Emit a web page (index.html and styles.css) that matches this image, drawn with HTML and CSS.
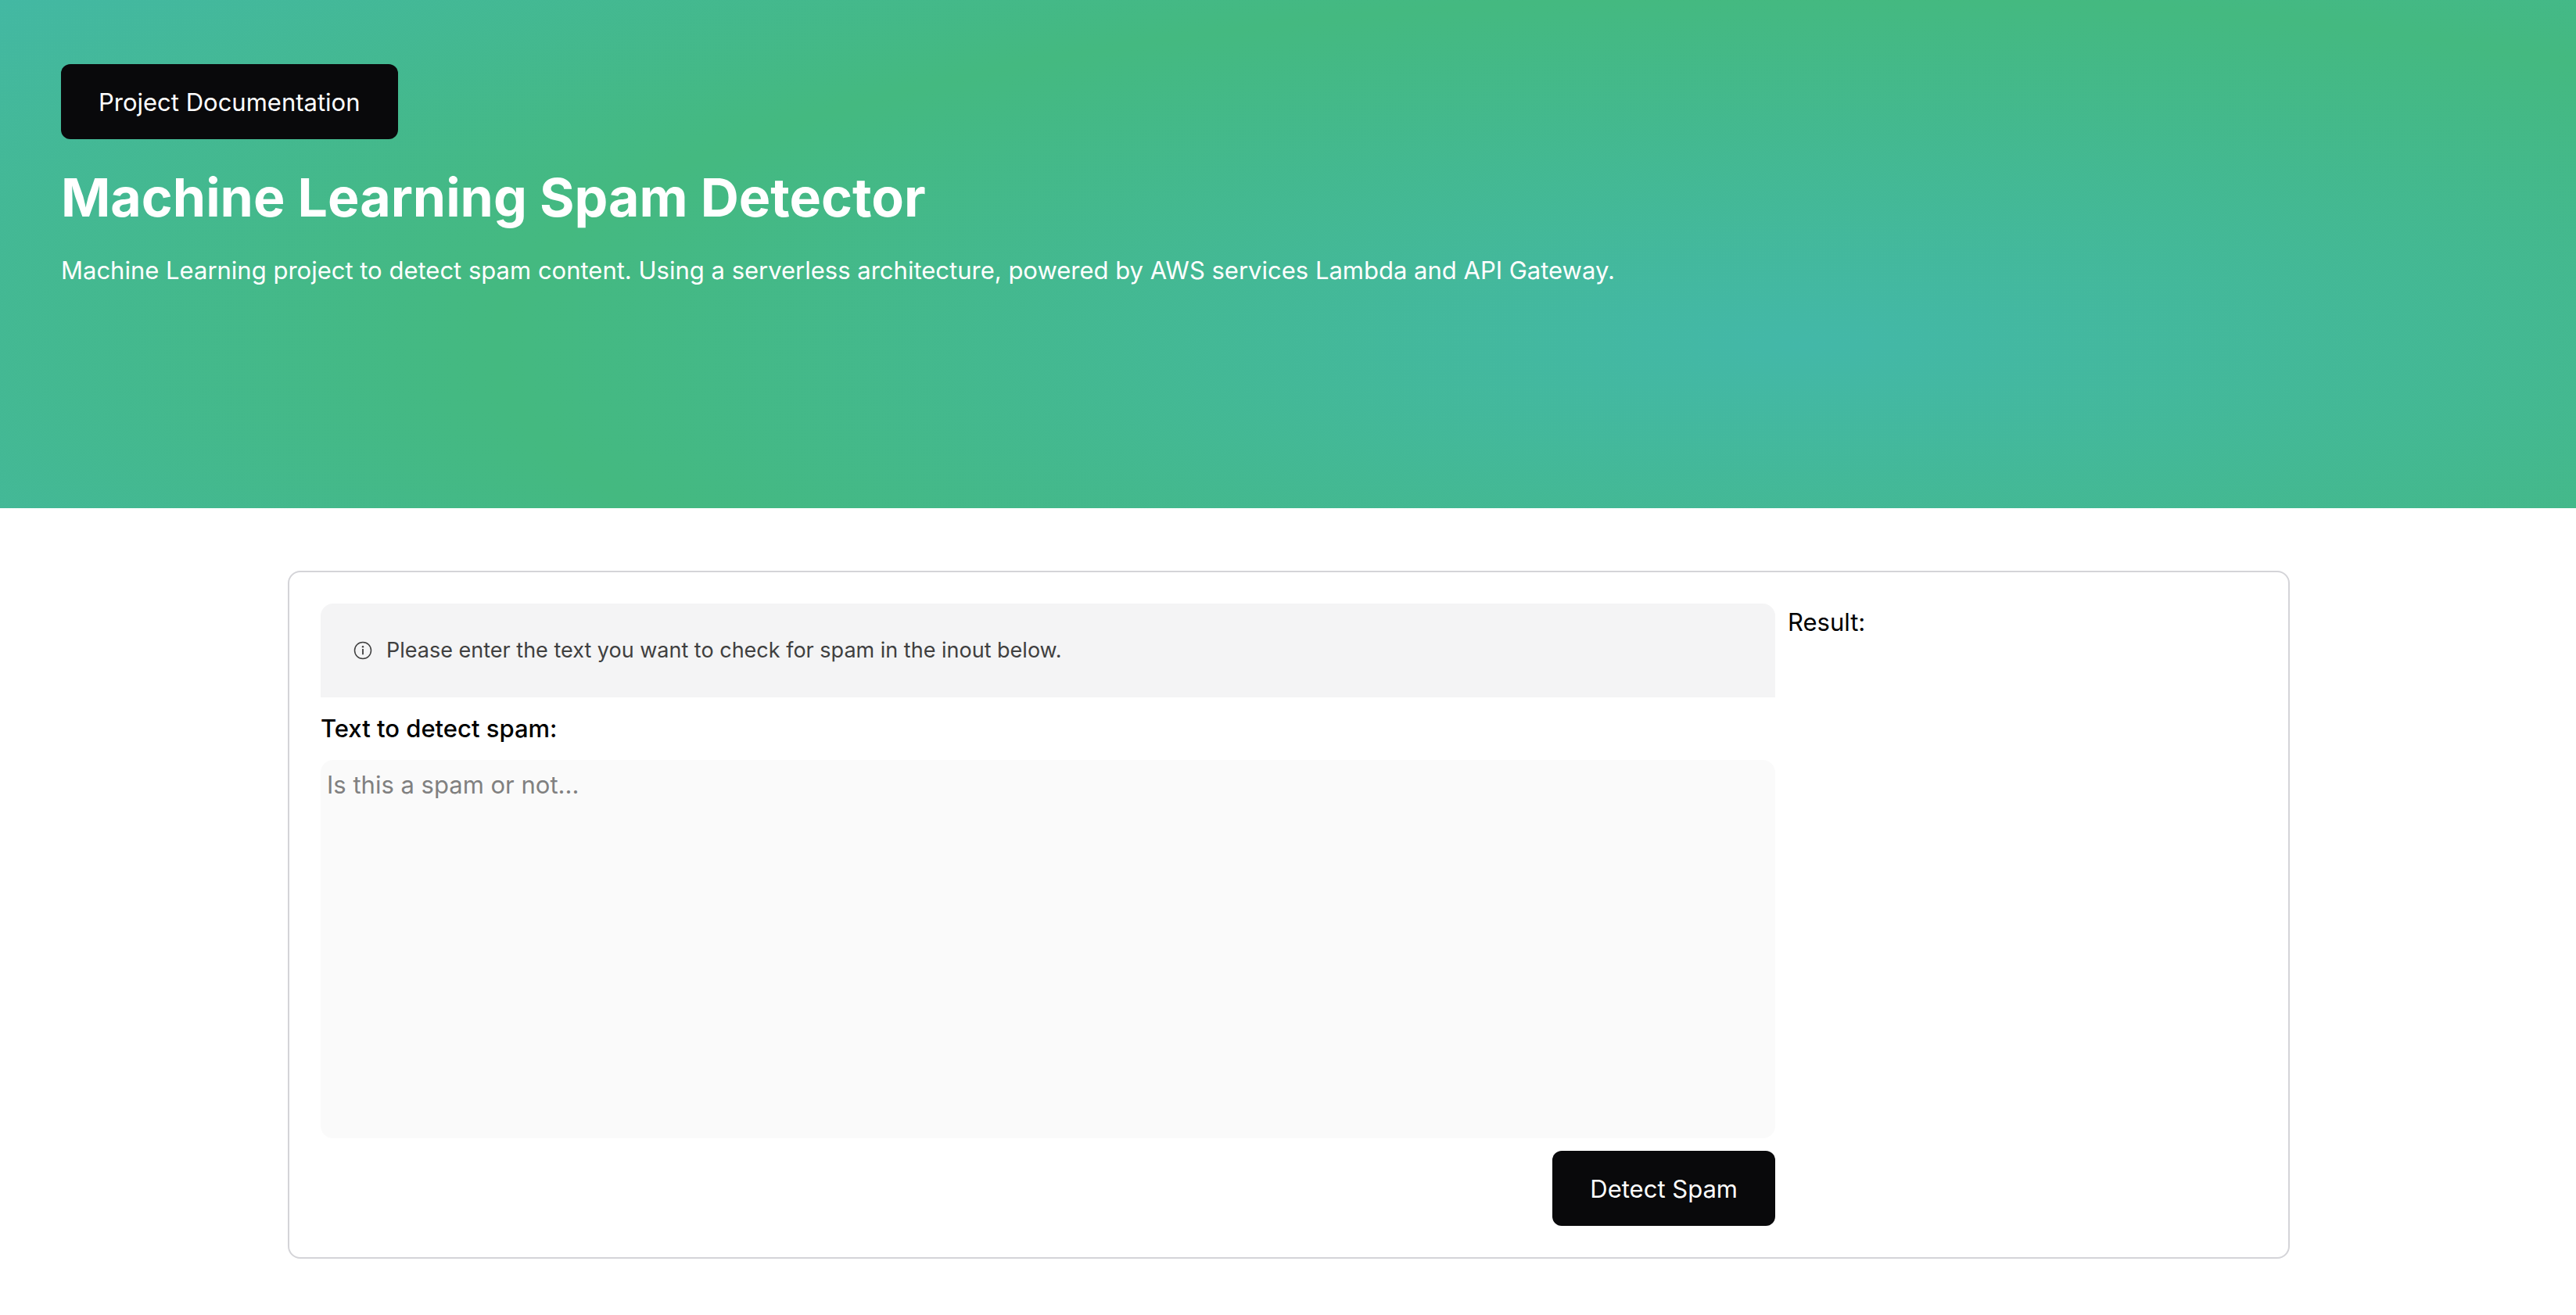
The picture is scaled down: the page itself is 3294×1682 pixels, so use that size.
FILE: index.html
```html
<!DOCTYPE html>
<html lang="en">
<head>
<meta charset="utf-8">
<meta name="viewport" content="width=device-width, initial-scale=1">
<title>Machine Learning Spam Detector</title>
<link rel="stylesheet" href="styles.css">
</head>
<body>
<header class="hero">
  <button type="button" class="button">Project Documentation</button>
  <h1 class="hero-title">Machine Learning Spam Detector</h1>
  <p class="hero-text">Machine Learning project to detect spam content. Using a serverless architecture, powered by AWS services Lambda and API Gateway.</p>
</header>
<main class="main">
  <div class="card">
    <form class="form">
      <div class="notice">
        <svg class="notice-icon" viewBox="0 0 24 24" fill="none" aria-hidden="true">
          <circle cx="12" cy="12" r="10.500" stroke="currentColor" stroke-width="1.500"/>
          <path d="M12 10v7.200" stroke="currentColor" stroke-width="1.800"/>
          <circle cx="12" cy="7.300" r="1.200" fill="currentColor"/>
        </svg>
        <p class="notice-text">Please enter the text you want to check for spam in the inout below.</p>
      </div>
      <label class="label" for="spam-text">Text to detect spam:</label>
      <textarea class="textarea" id="spam-text" placeholder="Is this a spam or not..."></textarea>
      <button type="button" class="button button-submit">Detect Spam</button>
    </form>
    <section class="result">
      <h2 class="result-title">Result:</h2>
    </section>
  </div>
</main>
</body>
</html>
```
FILE: styles.css
```css
* {
  box-sizing: border-box;
}

body {
  margin: 0;
  background: #fff;
  color: #000;
  font-family: Inter, "Liberation Sans", sans-serif;
  font-size: 31px;
  line-height: 48px;
}

h1,
h2,
p {
  margin: 0;
}

.hero {
  display: flex;
  flex-direction: column;
  align-items: flex-start;
  min-height: 650px;
  padding: 82px 78px;
  color: #fff;
  background: radial-gradient(86% 117% at 70% 68%, #43b8a8 0%, #44b980 59%, #43b8a8 106%);
}

.button {
  height: 96px;
  padding: 2px 48px 0;
  border: 0;
  border-radius: 12px;
  background: #09090b;
  color: #fff;
  font: inherit;
}

.hero-title {
  margin-top: 34px;
  font-size: 68px;
  font-weight: 700;
  line-height: 80px;
}

.hero-text {
  margin-top: 30px;
}

.main {
  display: flex;
  justify-content: center;
  padding: 80px 80px 80px 82px;
}

.card {
  display: grid;
  grid-template-columns: 1860px 1fr;
  gap: 16px;
  width: 100%;
  max-width: 2560px;
  padding: 40px;
  border: 2px solid #d4d4d8;
  border-radius: 16px;
}

.form {
  display: flex;
  flex-direction: column;
}

.notice {
  display: flex;
  align-items: center;
  gap: 18px;
  height: 120px;
  padding: 0 42px;
  border-radius: 16px 16px 0 0;
  background: #f4f4f5;
  color: #3f3f3f;
}

.notice-icon {
  width: 24px;
  height: 24px;
}

.notice-text {
  font-size: 27px;
}

.label {
  padding: 16px 0;
  font-weight: 500;
}

.textarea {
  display: block;
  width: 100%;
  height: 484px;
  padding: 8px;
  border: 0;
  border-radius: 16px;
  background: #fafafa;
  font: inherit;
  resize: none;
}

.textarea::placeholder {
  color: #808080;
}

.button-submit {
  align-self: flex-end;
  margin-top: 16px;
}

.result-title {
  font-size: 31px;
  font-weight: 400;
}
```
